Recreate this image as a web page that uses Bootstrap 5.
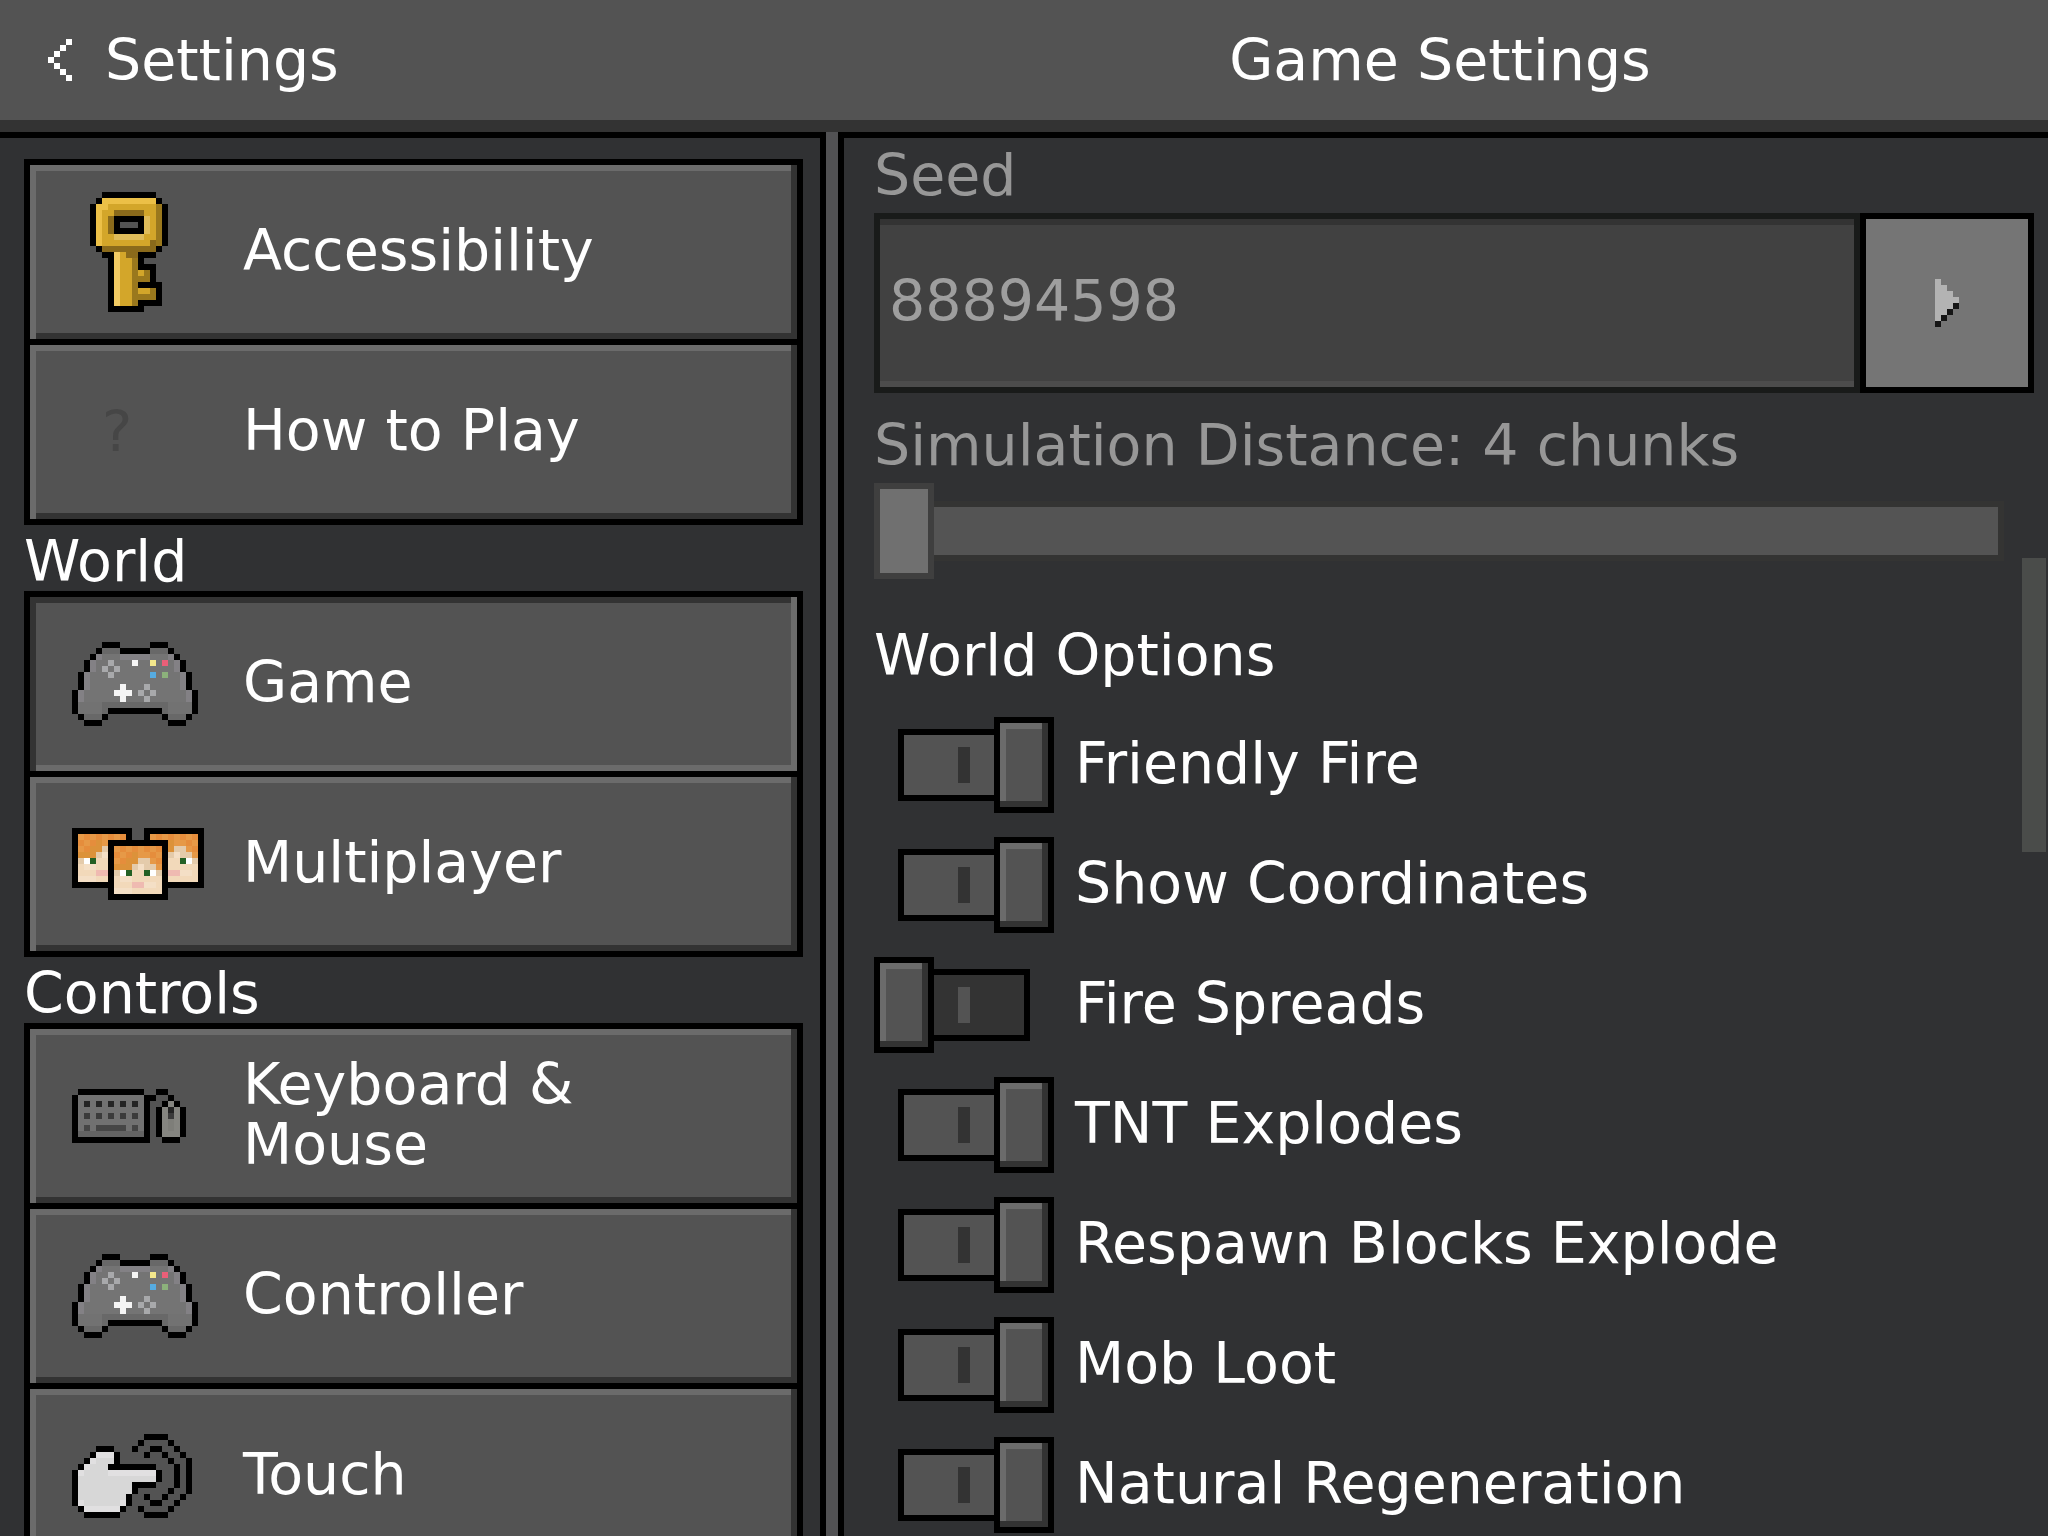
<!DOCTYPE html>
<html lang="en">
<head>
<meta charset="utf-8">
<meta name="viewport" content="width=device-width, initial-scale=1">
<title>Game Settings</title>
<link href="https://cdn.jsdelivr.net/npm/bootstrap@5.3.0/dist/css/bootstrap.min.css" rel="stylesheet">
<style>
:root{--base:#303133;--face:#535353;--lit:#6b6b6b;--shade:#333333}
body{font-family:"DejaVu Sans",sans-serif;font-size:57px;line-height:60px;color:#fff;background:var(--base)}
h1,h2{font-size:57px;line-height:60px;font-weight:400;margin:0}
svg{shape-rendering:crispEdges;display:block;flex:none}
svg path{fill:none;stroke-width:1}
.split{display:grid;grid-template-columns:13fr 19fr}
.topbar{height:132px;background:var(--face);border-bottom:12px solid var(--shade)}
.back{padding-left:48px;gap:33px}
.back:hover{color:#fff}
.pane{overflow-y:auto;min-height:0}
.pane::-webkit-scrollbar{display:none}
.pane-left{border-right:6px solid #525254;box-shadow:inset -6px 0 #000,inset 0 6px #000;padding:27px 23px 0 24px}
.pane-right{border-left:6px solid #525254;box-shadow:inset 6px 0 #000,inset 0 6px #000;padding:13px 14px 0 36px}
.section-name{padding-top:6px}
.tile{min-height:186px;border:6px solid #000;padding:0 42px;gap:39px;background:var(--face);color:#fff;
 box-shadow:inset 6px 0 var(--lit),inset -6px 0 var(--shade),inset 0 6px var(--lit),inset 0 -6px var(--shade)}
.tile + .tile{margin-top:-6px}
.tile:hover{color:#fff}
.tile.current{box-shadow:inset 6px 0 var(--shade),inset -6px 0 var(--lit),inset 0 6px var(--shade),inset 0 -6px var(--lit)}
.tile-icon{width:132px;flex:none}
.caption-text{padding-bottom:4px}
.help-mark{color:#464646;padding-left:30px}
.dim{color:#979797}
.seed-row{margin-top:8px;margin-bottom:22px}
.seed-row input{height:180px;min-width:0;padding:0 0 4px 9px;border:6px solid #191b1a;border-radius:0;background:#414141;color:#9e9e9e;
 box-shadow:inset 0 6px #333,inset 0 -6px #4c4c4c;outline:0}
.seed-row button{width:174px;border:6px solid #000;background:#757575;padding:0}
.distance{appearance:none;-webkit-appearance:none;display:block;height:96px;width:calc(100% - 30px);margin:8px 0 46px;background:none}
.distance::-webkit-slider-runnable-track{height:60px;background:#545454;border:6px solid #343433}
.distance::-webkit-slider-thumb{-webkit-appearance:none;width:60px;height:96px;margin:-24px 0 0 -6px;background:#707070;border:6px solid #3f3f3f;border-radius:0}
.options{margin-top:20px}
.option{height:120px;gap:21px}
.toggle{appearance:none;-webkit-appearance:none;position:relative;flex:none;width:180px;height:96px;margin:0}
.toggle::before{content:"";position:absolute;top:12px;left:24px;width:132px;height:72px;border:6px solid #000;
 background:linear-gradient(var(--face),var(--face)) 54px 12px/12px 36px no-repeat var(--shade)}
.toggle::after{content:"";position:absolute;top:0;left:0;width:60px;height:96px;border:6px solid #000;background:var(--face);
 box-shadow:inset -6px 0 var(--shade),inset 0 -6px var(--shade),inset 6px 6px var(--lit)}
.toggle:checked::before{background:linear-gradient(var(--shade),var(--shade)) 54px 12px/12px 36px no-repeat var(--face)}
.toggle:checked::after{left:120px}
.scroll-thumb{position:absolute;right:2px;top:426px;width:24px;height:294px;background:#4a4c4a}
</style>
<script src="https://cdn.jsdelivr.net/npm/bootstrap@5.3.0/dist/js/bootstrap.bundle.min.js"></script>
</head>
<body class="vh-100 overflow-hidden d-flex flex-column">

<header class="topbar split align-items-center flex-shrink-0">
  <a href="#" class="back d-flex align-items-center text-white text-decoration-none">
    <svg width="24" height="42" viewBox="0 0 4 7" aria-hidden="true"><path stroke="#fff" d="M3 .5h1M2 1.5h1M1 2.5h1M0 3.5h1M1 4.5h1M2 5.5h1M3 6.5h1"/></svg>
    <span>Settings</span>
  </a>
  <h1 class="text-center">Game Settings</h1>
</header>

<div class="split flex-grow-1 overflow-hidden">
  <nav class="pane pane-left">
    <div class="d-flex flex-column">
      <a href="#" class="tile d-flex align-items-center text-decoration-none">
        <svg class="tile-icon" height="120" viewBox="-3 0 22 20" aria-hidden="true">
          <path stroke="#000" d="M2 .5h9M1 1.5h1M11 1.5h1M1 9.5h1M11 9.5h1M4 4.5h5M4 5.5h1M8 5.5h1M4 6.5h5M2 10.5h2M8 10.5h3M3 11.5h1M8 11.5h1M3 12.5h1M8 12.5h3M3 13.5h1M10 13.5h1M3 14.5h1M10 14.5h1M3 15.5h1M8 15.5h4M3 16.5h1M11 16.5h1M3 17.5h1M11 17.5h1M3 18.5h1M8 18.5h4M3 19.5h6M.5 2v7M12.5 2v7"/>
          <path stroke="#d3a62a" d="M3 2.5h8M2 3.5h2M9 3.5h2M2 4.5h1M10 4.5h1M2 5.5h1M10 5.5h1M2 6.5h1M10 6.5h1M2 7.5h2M9 7.5h2M2 8.5h8M5.5 10v9M6.5 11v8M8 13.5h1M8 16.5h2"/>
          <path stroke="#ecc047" d="M2 1.5h9M1 2.5h2M1.5 3v6"/>
          <path stroke="#f2cb63" d="M4.5 10v9"/>
          <path stroke="#dfbc5a" d="M9.5 4v3M4 7.5h5"/>
          <path stroke="#8a6a1b" d="M4 3.5h5M3.5 4v3M10 8.5h1M2 9.5h9M6 10.5h2"/>
          <path stroke="#9a781d" d="M11.5 2v7M7.5 11v8M9 13.5h1M8 14.5h2M10 16.5h1M8 17.5h3"/>
        </svg>
        <span class="caption-text">Accessibility</span>
      </a>
      <a href="#" class="tile d-flex align-items-center text-decoration-none">
        <span class="tile-icon help-mark" aria-hidden="true">?</span>
        <span class="caption-text">How to Play</span>
      </a>
    </div>

    <h2 class="section-name">World</h2>
    <div class="d-flex flex-column">
      <a href="#" class="tile current d-flex align-items-center text-decoration-none" aria-current="page">
        <svg class="tile-icon" height="84" viewBox="0 0 22 14" aria-hidden="true">
          <g id="gamepad">
          <path style="fill:#747474" d="M5 2h11v1h1v2h1v3h1v4h-1v1h-3v-3h-9v3h-3v-1h-1v-4h1v-3h1v-2h1z"/>
          <path stroke="#686868" d="M5 1.5h3M13 1.5h3M5 10.5h11M5 11.5h1M15 11.5h1M2 12.5h3M16 12.5h3"/>
          <path stroke="#727272" d="M1 10.5h4M16 10.5h4M1 11.5h4M16 11.5h4"/>
          <path stroke="#838185" d="M4 2.5h1M8 2.5h5M16 2.5h1M3.5 3v2M17.5 3v2M2.5 5v3M18.5 5v3M1.5 8v2M19.5 8v2"/>
          <path stroke="#000" d="M5 .5h3M13 .5h3M4 1.5h1M8 1.5h5M16 1.5h1M3 2.5h1M17 2.5h1M2.5 3v2M18.5 3v2M1.5 5v3M19.5 5v3M.5 8v4M20.5 8v4M6 11.5h9M1 12.5h1M5 12.5h1M15 12.5h1M19 12.5h1M2 13.5h3M16 13.5h3"/>
          <path stroke="#a8a9ab" d="M6 3.5h1M5 4.5h1M7 4.5h1M6 5.5h1M12 7.5h1M11 8.5h1M13 8.5h1M12 9.5h1"/>
          <path stroke="#f5f5f5" d="M10 3.5h1M8 7.5h1M7 8.5h3M8 9.5h1"/>
          <path stroke="#f4e88c" d="M13 3.5h1"/><path stroke="#ea5f78" d="M15 3.5h1"/>
          <path stroke="#56ace2" d="M13 5.5h1"/><path stroke="#8cb17b" d="M15 5.5h1"/>
          </g>
        </svg>
        <span class="caption-text">Game</span>
      </a>
      <a href="#" class="tile d-flex align-items-center text-decoration-none">
        <svg class="tile-icon" height="72" viewBox="0 0 22 12" aria-hidden="true">
          <defs><g id="face">
            <rect width="10" height="10"/>
            <rect x="1" y="1" width="8" height="8" fill="#f2d9ba"/>
            <path stroke="#e69947" d="M1 1.5h8M1 2.5h8M1 3.5h4M7 3.5h2M8 4.5h1"/>
            <path stroke="#e58d3c" d="M2 1.5h1M4 1.5h1M6 1.5h1M1 2.5h1M3 2.5h1M7 2.5h1M2 3.5h1M8 1.5h1M8 3.5h1"/>
            <path stroke="#dc923a" d="M4 2.5h1M3 3.5h2M1 4.5h3"/>
            <path stroke="#e4cbab" d="M5 3.5h2M4 4.5h1M6 4.5h2M1 5.5h1M8 5.5h1"/>
            <path stroke="#f4dfc6" d="M5 4.5h1M2 6.5h2M6 7.5h2M1 8.5h3"/>
            <path stroke="#fff" d="M2 5.5h1M7 5.5h1"/>
            <path stroke="#236024" d="M3 5.5h1M6 5.5h1"/>
            <path stroke="#efbab1" d="M4 7.5h2"/>
          </g></defs>
          <use href="#face"/><use href="#face" x="12"/><use href="#face" x="6" y="2"/>
        </svg>
        <span class="caption-text">Multiplayer</span>
      </a>
    </div>

    <h2 class="section-name">Controls</h2>
    <div class="d-flex flex-column">
      <a href="#" class="tile d-flex align-items-center text-decoration-none">
        <svg class="tile-icon" height="54" viewBox="0 0 22 9" aria-hidden="true">
          <rect x="1" y="1" width="11" height="6" fill="#717171"/><rect x="1" y="7" width="11" height="1" fill="#636363"/>
          <path stroke="#000" d="M1 .5h11M14 .5h2M12 1.5h2M16 1.5h1M15 2.5h1M17 2.5h1M0 8.5h13M15 8.5h3M.5 1v8M12.5 1v8M14.5 3v5M18.5 3v5"/>
          <path stroke="#858580" d="M16 2.5h1M15.5 3v5M17.5 3v5M16 7.5h1"/>
          <path stroke="#7e7e79" d="M16.5 5v2"/>
          <path stroke="#242424" d="M2 2.5h1M4 2.5h1M6 2.5h1M8 2.5h1M10 2.5h1M16 3.5h1"/>
          <path stroke="#3b3b3b" d="M2 4.5h1M4 4.5h1M6 4.5h1M8 4.5h1M10 4.5h1M16 4.5h1"/>
          <path stroke="#464646" d="M2 6.5h1M4 6.5h5M10 6.5h1"/>
        </svg>
        <span class="caption-text">Keyboard &amp; Mouse</span>
      </a>
      <a href="#" class="tile d-flex align-items-center text-decoration-none">
        <svg class="tile-icon" height="84" viewBox="0 0 22 14" aria-hidden="true"><use href="#gamepad"/></svg>
        <span class="caption-text">Controller</span>
      </a>
      <a href="#" class="tile d-flex align-items-center text-decoration-none">
        <svg class="tile-icon" height="84" viewBox="0 0 22 14" aria-hidden="true">
          <path stroke="#d7d7d7" d="M4 3.5h3M3 4.5h4M2 5.5h4M1 6.5h13M1 7.5h13M1 8.5h9M1 9.5h9M1 10.5h8M1 11.5h8M2 12.5h6"/>
          <path stroke="#e1e0e1" d="M4 3.5h3M3 4.5h1M2 5.5h1M1 6.5h1M6 6.5h8M1 11.5h1M8 11.5h1M2 12.5h6"/>
          <path stroke="#000" d="M12 .5h4M11 1.5h1M16 1.5h1M4 2.5h3M10 2.5h1M13 2.5h2M17 2.5h1M3 3.5h1M7 3.5h1M12 3.5h1M15 3.5h1M18 3.5h1M2 4.5h1M7 4.5h1M16 4.5h1M1 5.5h1M6 5.5h8M14 6.5h1M14 7.5h1M10 8.5h4M10 9.5h1M16 9.5h1M9 10.5h1M12 10.5h1M15 10.5h1M18 10.5h1M9 11.5h1M13 11.5h2M17 11.5h1M1 12.5h1M8 12.5h1M11 12.5h1M16 12.5h1M2 13.5h6M12 13.5h4M.5 6v6M17.5 5v4M19.5 4v6"/>
        </svg>
        <span class="caption-text">Touch</span>
      </a>
    </div>
  </nav>

  <div class="position-relative overflow-hidden d-flex flex-column">
    <main class="pane pane-right flex-grow-1">
      <label for="seed" class="dim d-block">Seed</label>
      <div class="seed-row d-flex">
        <input id="seed" type="text" class="flex-grow-1" value="88894598" readonly>
        <button type="button" class="d-flex align-items-center justify-content-center" aria-label="Seed templates">
          <svg width="24" height="48" viewBox="0 0 4 8" aria-hidden="true">
            <path stroke="#b3b3b3" d="M0 .5h1M0 1.5h2M0 2.5h3M0 3.5h4M0 4.5h3M0 5.5h2M0 6.5h1"/>
            <path stroke="#151515" d="M3 4.5h1M2 5.5h1M1 6.5h1M0 7.5h1"/>
          </svg>
        </button>
      </div>
      <label for="distance" class="dim d-block">Simulation Distance: 4 chunks</label>
      <input id="distance" class="distance" type="range" min="4" max="12" value="4" disabled>

      <h2>World Options</h2>
      <div class="options">
        <label class="option d-flex align-items-center"><input class="toggle" type="checkbox" role="switch" checked><span class="caption-text">Friendly Fire</span></label>
        <label class="option d-flex align-items-center"><input class="toggle" type="checkbox" role="switch" checked><span class="caption-text">Show Coordinates</span></label>
        <label class="option d-flex align-items-center"><input class="toggle" type="checkbox" role="switch"><span class="caption-text">Fire Spreads</span></label>
        <label class="option d-flex align-items-center"><input class="toggle" type="checkbox" role="switch" checked><span class="caption-text">TNT Explodes</span></label>
        <label class="option d-flex align-items-center"><input class="toggle" type="checkbox" role="switch" checked><span class="caption-text">Respawn Blocks Explode</span></label>
        <label class="option d-flex align-items-center"><input class="toggle" type="checkbox" role="switch" checked><span class="caption-text">Mob Loot</span></label>
        <label class="option d-flex align-items-center"><input class="toggle" type="checkbox" role="switch" checked><span class="caption-text">Natural Regeneration</span></label>
      </div>
    </main>
    <div class="scroll-thumb"></div>
  </div>
</div>
</body>
</html>
